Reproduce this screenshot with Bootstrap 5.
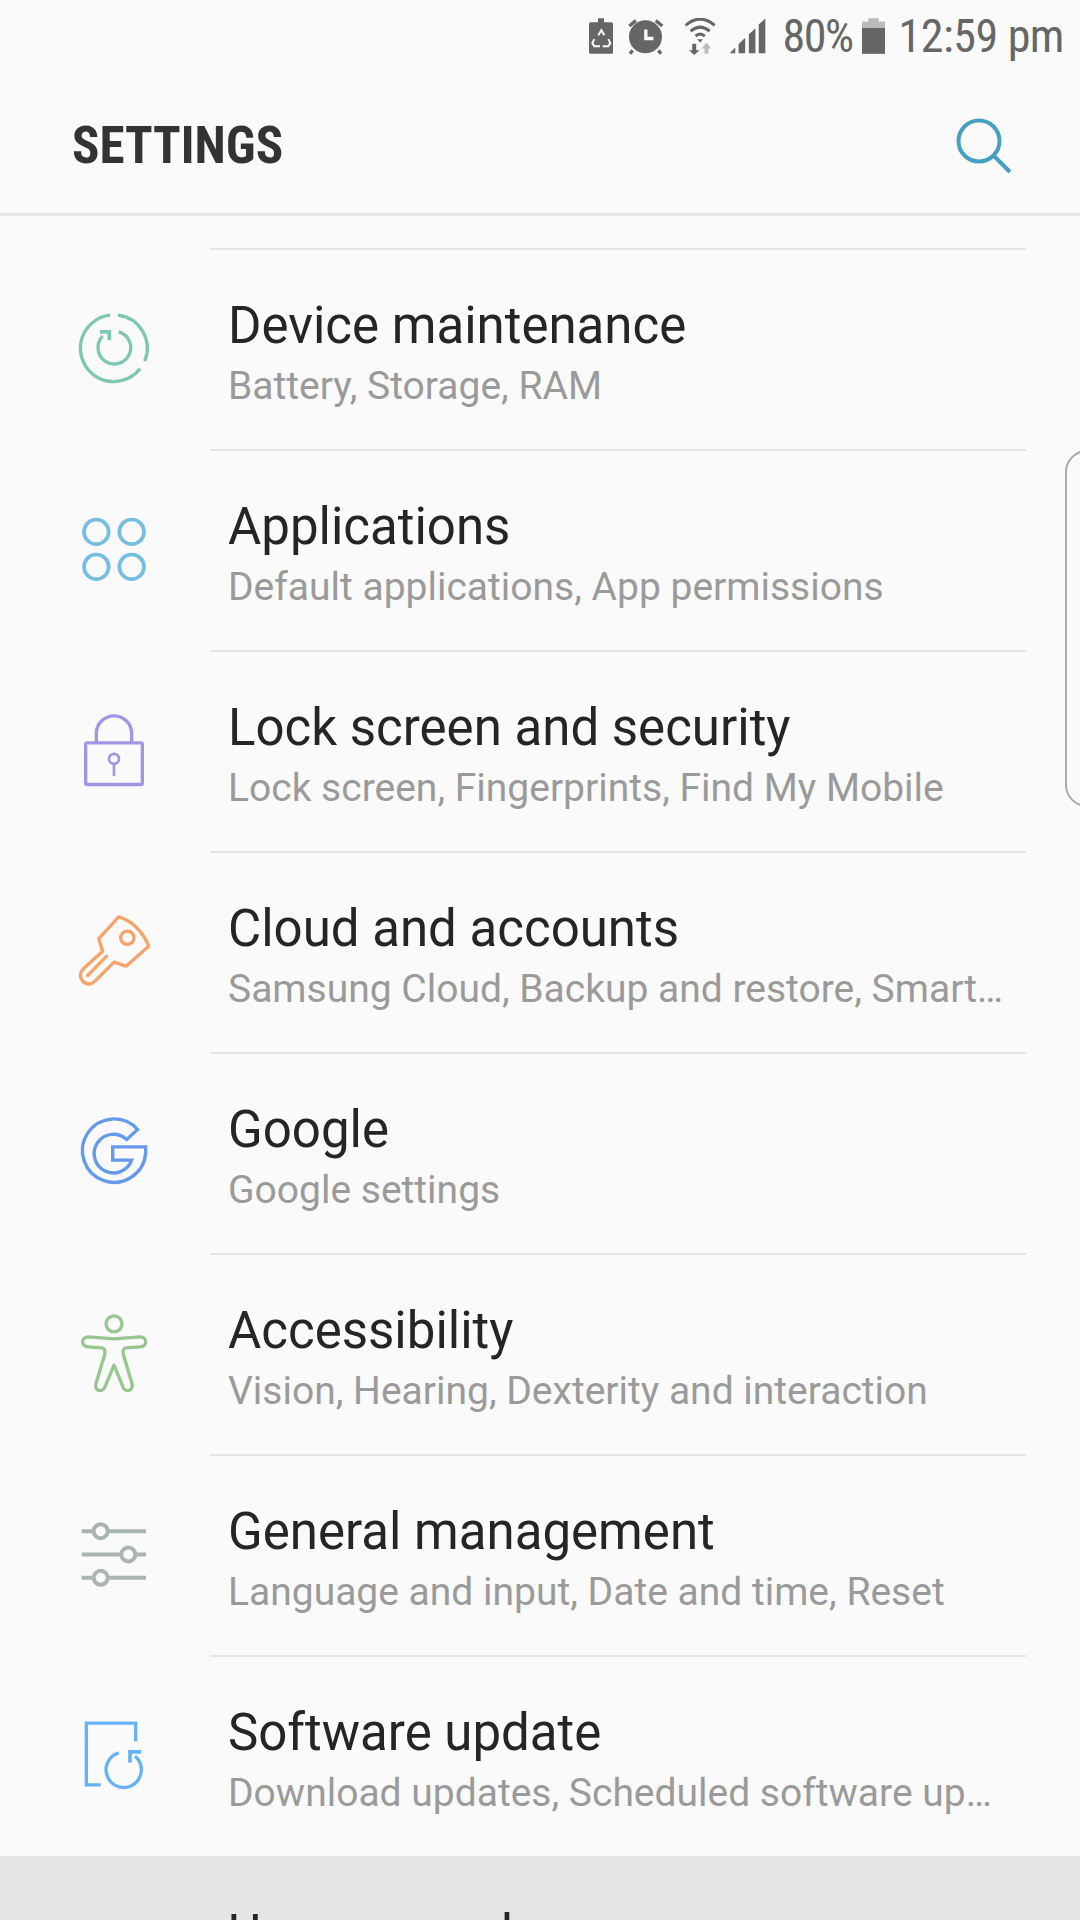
<!DOCTYPE html>
<html lang="en">
<head>
  <meta charset="UTF-8">
  <title>Settings</title>
  <link href="https://cdn.jsdelivr.net/npm/bootstrap@5.3.3/dist/css/bootstrap.min.css" rel="stylesheet">
  <style>
    html, body { height: 1920px; overflow: hidden; }
    body { background: #fafafa; font-family: Roboto, "Liberation Sans", sans-serif; color: #252525; }
    .phone { width: 1080px; height: 1920px; overflow: hidden; position: relative; }
    .status-bar { height: 72px; padding-right: 16px; color: #666; font-size: 46px; }
    .status-text { font-stretch: condensed; letter-spacing: -.5px; line-height: 1; }
    .status-pct { letter-spacing: -1.5px; }
    .st-1 { margin-left: 14px; }
    .st-2 { margin-left: 20px; }
    .st-3 { margin-left: 12px; }
    .st-4 { margin-left: 17px; }
    .st-5 { margin-left: 9px; }
    .st-6 { margin-left: 14px; }
    .app-bar { height: 144px; padding: 6px 68px 0 72px; border-bottom: 3px solid #e6e6e6; }
    .app-title { font-weight: 700; font-size: 51px; font-stretch: condensed; color: #333; margin: 0; }
    .rows { padding-top: 32px; }
    .row-item { height: 201px; }
    .row-icon { width: 210px; padding-left: 18px; }
    .row-body { width: 816px; border-top: 2px solid #e4e4e4; padding: 49px 0 0 18px; margin-right: 54px; }
    .row-title { font-size: 51px; line-height: 54px; }
    .row-sub { font-size: 39px; line-height: 48px; color: #9a9a9a; margin-top: 9px; white-space: nowrap; }
    .row-grey { background: #e5e5e5; }
    .row-grey .row-body { border-top-color: #e5e5e5; }
    .scroll-thumb { position: absolute; left: 1065px; top: 450px; width: 30px; height: 357px; border: 2px solid #aaa; border-radius: 22px 0 0 22px; }
  </style>
</head>
<body>
<div class="phone">

  <!-- Status bar -->
  <div class="status-bar d-flex justify-content-end align-items-center">
    <svg width="24" height="36" viewBox="93 55 72 107"><path d="M120 55H138V67H160Q165 67 165 72V158Q165 162 160 162H98Q93 162 93 158V72Q93 67 98 67H120Z" fill="#666"/><path d="M121 106l9-15 9 15M109 118l-6 12 6 9h17M151 118l6 12-6 9h-17" fill="none" stroke="#fafafa" stroke-width="6"/></svg>
    <svg class="st-1" width="37" height="37" viewBox="205 50 112 112"><circle cx="261" cy="107" r="50" fill="#666"/><path d="M262 85V112H285" fill="none" stroke="#fafafa" stroke-width="10"/><path d="M212 74L232 58M312 74L292 58M222 148L214 158M300 148L308 158" stroke="#666" stroke-width="10"/></svg>
    <svg class="st-2" width="33" height="37" viewBox="375 50 100 112"><path d="M380 72Q424 35 468 72M395 90Q424 65 453 90M410 105Q424 92 438 105" fill="none" stroke="#666" stroke-width="9"/><path d="M415 114h18l-9 10z" fill="#666"/><path d="M400 128h12v20h10l-16 14-16-14h10z" fill="#666"/><path d="M443 125l15 17h-9v16h-12v-16h-9z" fill="#bbb"/></svg>
    <svg class="st-3" width="37" height="36" viewBox="508 54 112 108"><path d="M510 160L527 143V160ZM537 160V133L557 113V160ZM568 160V103L588 85V160ZM598 160V73L618 55V160Z" fill="#666"/></svg>
    <span class="status-text status-pct st-4">80%</span>
    <svg class="st-5" width="23" height="36" viewBox="906 55 69 107"><path d="M925 55H956V65H975V84H906V65H925Z" fill="#bbb"/><rect x="906" y="84" width="69" height="78" fill="#666"/></svg>
    <span class="status-text st-6">12:59 pm</span>
  </div>

  <!-- App bar -->
  <div class="app-bar d-flex justify-content-between align-items-center">
    <h1 class="app-title">SETTINGS</h1>
    <svg width="56" height="56" viewBox="0 0 56 56"><circle cx="23" cy="23" r="20.5" fill="none" stroke="#46a0c0" stroke-width="4"/><path d="M38 38l16 16" stroke="#46a0c0" stroke-width="4"/></svg>
  </div>

  <!-- Rows -->
  <div class="rows">
    <div class="row-item d-flex">
      <div class="row-icon d-flex align-items-center justify-content-center">
        <svg width="90" height="90" viewBox="87 73.5 270 270" fill="none" stroke="#7fc7b4" stroke-width="10"><path d="M210 107A100 100 0 1 0 300 268M234 107A100 100 0 0 1 314 245"/><path d="M236 157A49 49 0 1 1 188 170"/><path d="M180 157H208V182" stroke-width="11"/></svg>
      </div>
      <div class="row-body">
        <div class="row-title">Device maintenance</div>
        <div class="row-sub">Battery, Storage, RAM</div>
      </div>
    </div>
    <div class="row-item d-flex">
      <div class="row-icon d-flex align-items-center justify-content-center">
        <svg width="90" height="90" viewBox="87 676.5 270 270" fill="none" stroke="#76bde2" stroke-width="11"><circle cx="169" cy="757" r="37"/><circle cx="275" cy="757" r="37"/><circle cx="169" cy="862" r="37"/><circle cx="275" cy="862" r="37"/></svg>
      </div>
      <div class="row-body">
        <div class="row-title">Applications</div>
        <div class="row-sub">Default applications, App permissions</div>
      </div>
    </div>
    <div class="row-item d-flex">
      <div class="row-icon d-flex align-items-center justify-content-center">
        <svg width="90" height="90" viewBox="87 49.5 270 270" fill="none" stroke="#a594e6" stroke-width="10"><path d="M169 158V132A53 53 0 0 1 275 132V158"/><rect x="137" y="160" width="170" height="125" rx="4"/><circle cx="222" cy="208" r="15" stroke-width="8"/><path d="M222 224V260" stroke-width="8"/></svg>
      </div>
      <div class="row-body">
        <div class="row-title">Lock screen and security</div>
        <div class="row-sub">Lock screen, Fingerprints, Find My Mobile</div>
      </div>
    </div>
    <div class="row-item d-flex">
      <div class="row-icon d-flex align-items-center justify-content-center">
        <svg width="90" height="90" viewBox="87 652.5 270 270" fill="none" stroke="#f6a46c" stroke-width="10" stroke-linejoin="round" stroke-linecap="round"><path d="M236 682C275 692 310 728 326 770L258 830L222 818L165 875C140 900 105 865 130 838L188 785L176 748Z"/><circle cx="262" cy="745" r="20"/><path d="M143 858L200 800"/></svg>
      </div>
      <div class="row-body">
        <div class="row-title">Cloud and accounts</div>
        <div class="row-sub">Samsung Cloud, Backup and restore, Smart…</div>
      </div>
    </div>
    <div class="row-item d-flex">
      <div class="row-icon d-flex align-items-center justify-content-center">
        <svg width="90" height="90" viewBox="87 55.5 270 270" fill="none" stroke="#659aea" stroke-width="10"><path d="M293 120A95 95 0 1 0 317 190V172H218V212H275A58 58 0 1 1 260 150Z"/></svg>
      </div>
      <div class="row-body">
        <div class="row-title">Google</div>
        <div class="row-sub">Google settings</div>
      </div>
    </div>
    <div class="row-item d-flex">
      <div class="row-icon d-flex align-items-center justify-content-center">
        <svg width="90" height="90" viewBox="87 658.5 270 270" fill="none" stroke="#97c68f" stroke-width="10" stroke-linejoin="round"><circle cx="222" cy="703" r="24"/><path d="M222 748L300 742C323 742 323 772 300 772L258 775C250 776 248 785 250 795L276 882C282 905 255 912 248 890L222 827L196 890C188 912 162 905 168 882L194 795C196 785 194 776 186 775L145 772C122 772 122 742 145 742Z"/></svg>
      </div>
      <div class="row-body">
        <div class="row-title">Accessibility</div>
        <div class="row-sub">Vision, Hearing, Dexterity and interaction</div>
      </div>
    </div>
    <div class="row-item d-flex">
      <div class="row-icon d-flex align-items-center justify-content-center">
        <svg width="90" height="90" viewBox="87 31.5 270 270" fill="none" stroke="#a9b5b5" stroke-width="12"><path d="M125 95H158M206 95H318M125 165H241M289 165H318M125 235H158M206 235H318"/><circle cx="182" cy="95" r="21"/><circle cx="265" cy="165" r="21"/><circle cx="182" cy="235" r="21"/></svg>
      </div>
      <div class="row-body">
        <div class="row-title">General management</div>
        <div class="row-sub">Language and input, Date and time, Reset</div>
      </div>
    </div>
    <div class="row-item d-flex">
      <div class="row-icon d-flex align-items-center justify-content-center">
        <svg width="90" height="90" viewBox="87 634.5 270 270" fill="none" stroke="#66b2f5" stroke-width="10"><path d="M182 856H139V671H287V725"/><path d="M236 760A53 53 0 1 0 285 770"/><path d="M270 790V757H303" stroke-width="11"/></svg>
      </div>
      <div class="row-body">
        <div class="row-title">Software update</div>
        <div class="row-sub">Download updates, Scheduled software up…</div>
      </div>
    </div>
    <div class="row-item row-grey d-flex">
      <div class="row-icon"></div>
      <div class="row-body">
        <div class="row-title">User manual</div>
      </div>
    </div>
  </div>

  <div class="scroll-thumb"></div>
</div>
<script src="https://cdn.jsdelivr.net/npm/bootstrap@5.3.3/dist/js/bootstrap.bundle.min.js"></script>
</body>
</html>
